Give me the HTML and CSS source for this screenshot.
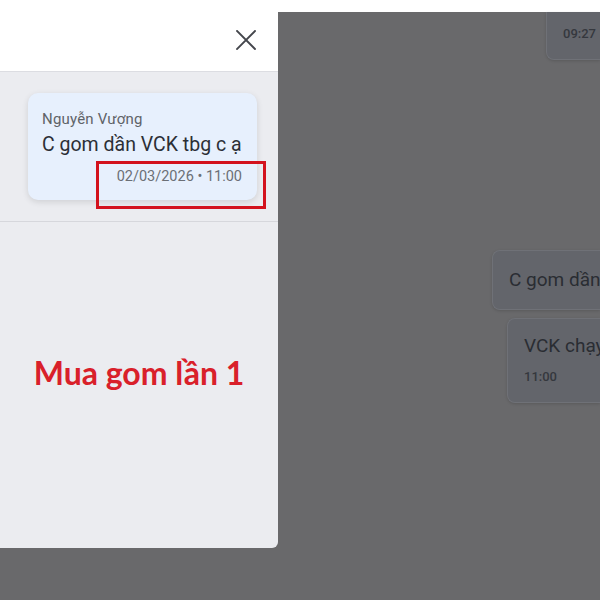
FILE: index.html
```html
<!DOCTYPE html>
<html>
<head>
<meta charset="utf-8">
<link rel="stylesheet" href="styles.css">
</head>
<body>
<div class="screen">
  <aside class="drawer">
    <header class="drawer-head">
      <svg class="close" width="20" height="20" viewBox="0 0 20 20"><path d="M1 1 L19 19 M19 1 L1 19" stroke="#44464c" stroke-width="1.9" stroke-linecap="square"/></svg>
    </header>
    <section class="results">
      <div class="card">
        <div class="name">Nguyễn Vượng</div>
        <div class="msg">C gom dần VCK tbg c ạ</div>
        <div class="time">02/03/2026 • 11:00</div>
      </div>
      <div class="mark"></div>
    </section>
    <div class="note">Mua gom lần 1</div>
  </aside>
  <main class="chat">
    <div class="strip"></div>
    <div class="dim">
      <div class="bubble b1"><span class="small">09:27</span></div>
      <div class="bubble b2"><span class="big">C gom dần</span></div>
      <div class="bubble b3"><span class="big">VCK chạy</span><span class="small">11:00</span></div>
    </div>
  </main>
</div>
</body>
</html>
```
FILE: styles.css
```css
html, body { margin: 0; padding: 0; }
body {
  width: 600px;
  height: 600px;
  overflow: hidden;
  background: #69696b;
  font-family: Roboto, "Noto Sans", sans-serif;
}
.screen { display: flex; height: 600px; }
.drawer {
  width: 278px;
  height: 548px;
  flex: none;
  background: #ebecf0;
  border-bottom-right-radius: 6px;
  display: flex;
  flex-direction: column;
  overflow: hidden;
}
.drawer-head {
  height: 72px;
  background: #fff;
  border-bottom: 1px solid #dcdde2;
  display: flex;
  justify-content: flex-end;
  align-items: center;
  padding: 9px 22px 0 0;
  box-sizing: border-box;
}
.results {
  position: relative;
  padding: 21px 21px 21px 28px;
  border-bottom: 1px solid #d6d7dc;
}
.card {
  background: #e7f0fd;
  border-radius: 10px;
  box-shadow: 0 2px 6px rgba(0,0,0,0.12);
  padding: 17px 8px 0 14px;
  height: 107px;
  box-sizing: border-box;
}
.name { font-size: 15px; color: #5f6368; line-height: 18px; letter-spacing: 0.2px; }
.msg { font-size: 19.5px; color: #2c2f36; line-height: 26px; margin-top: 4px; white-space: nowrap; }
.time { font-size: 14.5px; color: #6b6f76; text-align: right; line-height: 18px; margin-top: 10px; padding-right: 7px; }
.mark {
  position: absolute;
  left: 96px;
  top: 89px;
  width: 164px;
  height: 42px;
  border: 3px solid #d3121d;
}
.note {
  text-align: center;
  margin-top: 131px;
  font-family: Lato, "Open Sans", sans-serif;
  font-weight: 700;
  font-size: 32px;
  color: #d9202a;
  line-height: 40px;
}
.chat { flex: 1; display: flex; flex-direction: column; overflow: hidden; }
.strip { height: 12px; background: #fff; flex: none; }
.dim {
  flex: 1;
  display: flex;
  flex-direction: column;
  align-items: flex-end;
  color: #2a2d33;
}
.bubble {
  background: #63656b;
  border: 1px solid #6f7177;
  border-right: none;
  box-shadow: 0 1px 3px rgba(0,0,0,0.15);
  box-sizing: border-box;
  display: flex;
  flex-direction: column;
  overflow: hidden;
}
.b1 {
  width: 54px;
  height: 48px;
  border-top: none;
  border-radius: 0 0 0 8px;
  padding: 13px 0 0 16px;
}
.b2 {
  width: 108px;
  height: 60px;
  margin-top: 190px;
  border-radius: 8px 0 0 8px;
  padding: 17px 0 0 16px;
}
.b3 {
  width: 93px;
  height: 85px;
  margin-top: 8px;
  border-radius: 8px 0 0 8px;
  padding: 15px 0 0 16px;
}
.small { font-size: 13px; line-height: 18px; white-space: nowrap; font-weight: 500; color: #35383e; }
.big { font-size: 19px; line-height: 24px; white-space: nowrap; }
.b3 .small { margin-top: 10px; }
```
